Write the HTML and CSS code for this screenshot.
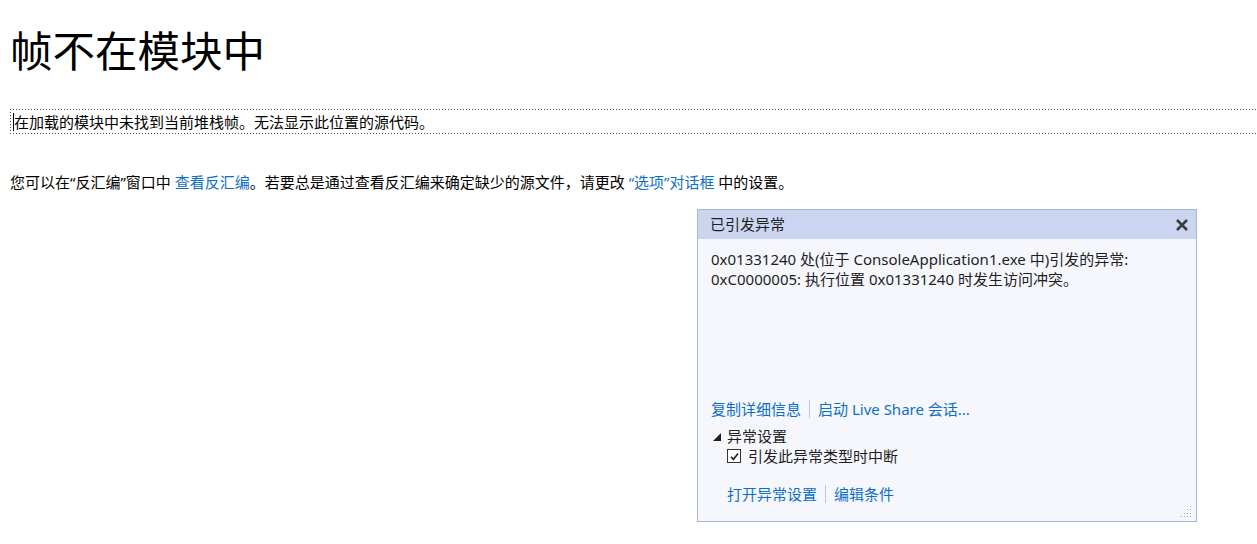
FILE: index.html
```html
<!DOCTYPE html>
<html lang="zh-CN">
<head>
<meta charset="utf-8">
<title>帧不在模块中</title>
<link rel="stylesheet" href="styles.css">
</head>
<body>
<main class="page">
  <h1 class="title">帧不在模块中</h1>
  <div class="notice"><span class="caret"></span>在加载的模块中未找到当前堆栈帧。无法显示此位置的源代码。</div>
  <p class="hint">您可以在<span class="q">“</span>反汇编<span class="q">”</span>窗口中 <a class="link" href="#">查看反汇编</a>。若要总是通过查看反汇编来确定缺少的源文件，请更改 <a class="link" href="#"><span class="q">“</span>选项<span class="q">”</span>对话框</a> 中的设置。</p>
</main>

<section class="exc">
  <header class="exc-head">
    <span class="exc-title">已引发异常</span>
    <svg class="exc-close" width="14" height="14" viewBox="0 0 14 14"><path d="M2 2 L12 12 M12 2 L2 12" stroke="#3c3c3c" stroke-width="2.6" fill="none"/></svg>
  </header>
  <div class="exc-body">
    <p class="exc-msg">0x01331240 处(位于 ConsoleApplication1.exe 中)引发的异常:<br>0xC0000005: 执行位置 0x01331240 时发生访问冲突。</p>
    <div class="exc-foot">
      <div class="links">
        <a class="link" href="#">复制详细信息</a><span class="sep"></span><a class="link" href="#">启动 Live Share 会话...</a>
      </div>
      <div class="settings-head">
        <svg class="tri" width="8" height="8" viewBox="0 0 8 8"><path d="M8 0 L8 8 L0 8 Z" fill="#1e1e1e"/></svg>
        <span>异常设置</span>
      </div>
      <label class="check-row">
        <span class="box"><svg width="11" height="11" viewBox="0 0 11 11"><path d="M2 5.8 L4.4 8.4 L9 2.4" stroke="#1e1e1e" stroke-width="1.6" fill="none"/></svg></span>
        <span>引发此异常类型时中断</span>
      </label>
      <div class="links links-bottom">
        <a class="link" href="#">打开异常设置</a><span class="sep"></span><a class="link" href="#">编辑条件</a>
      </div>
    </div>
    <svg class="grip" width="12" height="12" viewBox="0 0 12 12">
      <g fill="#a6a6a6">
        <rect x="10" y="0" width="1" height="1"/>
        <rect x="10" y="3" width="1" height="1"/><rect x="7" y="3" width="1" height="1"/>
        <rect x="10" y="7" width="1" height="1"/><rect x="7" y="7" width="1" height="1"/><rect x="4" y="7" width="1" height="1"/>
        <rect x="10" y="10" width="1" height="1"/><rect x="7" y="10" width="1" height="1"/><rect x="4" y="10" width="1" height="1"/><rect x="1" y="10" width="1" height="1"/>
      </g>
    </svg>
  </div>
</section>
</body>
</html>
```

FILE: styles.css
```css
html, body {
  margin: 0;
  padding: 0;
  overflow: hidden;
  background: #ffffff;
}

body {
  font-family: "Noto Sans", "Noto Sans CJK SC", sans-serif;
  font-size: 15px;
  color: #1e1e1e;
  width: 1257px;
  height: 544px;
  position: relative;
}

.page {
  padding: 24px 0 0 10px;
}

.title {
  margin: 0;
  font-family: "Noto Sans CJK SC", sans-serif;
  font-weight: 400;
  font-size: 42.5px;
  line-height: 50px;
  color: #000;
}

.notice {
  margin: 35px -40px 0 0;
  height: 25px;
  line-height: 24px;
  padding-left: 3px;
  color: #000;
  display: flex;
  align-items: center;
  background-image:
    repeating-linear-gradient(to right, #4a4a4a 0 1px, transparent 1px 3px),
    repeating-linear-gradient(to right, #4a4a4a 0 1px, transparent 1px 3px),
    repeating-linear-gradient(to bottom, #4a4a4a 0 1px, transparent 1px 3px);
  background-size: 100% 1px, 100% 1px, 1px 100%;
  background-position: 0 0, 0 100%, 0 0;
  background-repeat: no-repeat;
}

.caret {
  display: inline-block;
  width: 1px;
  height: 18px;
  background: #000;
}

.hint {
  margin: 38px 0 0;
  line-height: 20px;
  color: #000;
}

.q {
  font-family: "Noto Sans", sans-serif;
}

.link {
  color: #0e6fc7;
  text-decoration: none;
}

.exc {
  position: absolute;
  left: 697px;
  top: 209px;
  width: 498px;
  height: 311px;
  border: 1px solid #a9b6d8;
  background: #f5f7fd;
  display: flex;
  flex-direction: column;
}

.exc-head {
  height: 29px;
  background: #ccd5f0;
  display: flex;
  align-items: center;
  justify-content: space-between;
  padding: 0 7px 0 12px;
}

.exc-title {
  line-height: 20px;
  margin-top: -2px;
}

.exc-body {
  flex: 1;
  display: flex;
  flex-direction: column;
  padding: 10px 13px 17px 13px;
  position: relative;
}

.exc-msg {
  margin: 0;
  line-height: 20px;
}

.exc-foot {
  margin-top: auto;
  display: flex;
  flex-direction: column;
}

.links {
  display: flex;
  align-items: center;
  line-height: 20px;
}

.sep {
  width: 1px;
  height: 18px;
  background: #c4c8d2;
  margin: 0 8px;
}

.settings-head {
  display: flex;
  align-items: center;
  margin-top: 7px;
  line-height: 20px;
  padding-left: 2px;
}

.tri {
  margin-right: 6px;
  margin-top: 1px;
}

.check-row {
  display: flex;
  align-items: center;
  line-height: 20px;
  padding-left: 16px;
}

.box {
  width: 12px;
  height: 12px;
  border: 1px solid #333;
  background: #fff;
  display: flex;
  align-items: center;
  justify-content: center;
  margin-right: 7px;
}

.links-bottom {
  margin-top: 18px;
  padding-left: 16px;
}

.grip {
  position: absolute;
  right: 4px;
  bottom: 3px;
}
```
